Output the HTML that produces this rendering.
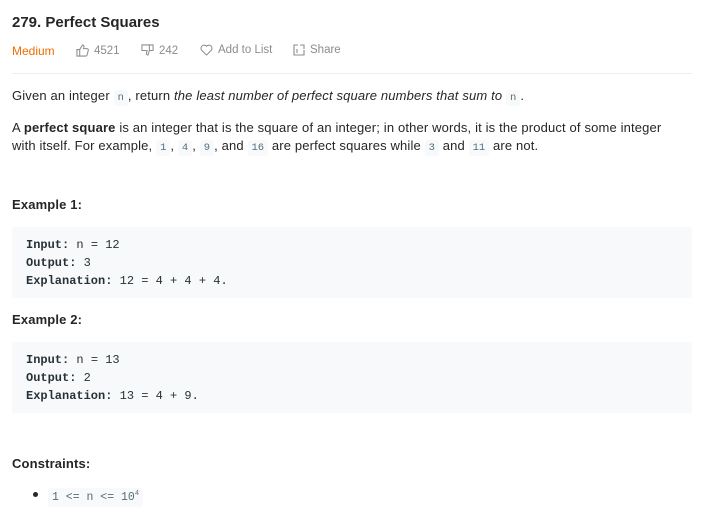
<!DOCTYPE html>
<html><head><style>
body{margin:0;background:#fff;font-family:"Liberation Sans",sans-serif;color:#262626;width:702px;height:516px;overflow:hidden;position:relative}
.a{position:absolute;white-space:nowrap}
code{font-family:"Liberation Mono",monospace;font-size:10.5px;background:#f7f9fa;color:#546e7a;padding:2px 4px;border-radius:3px;letter-spacing:0}
.p{font-size:13px;color:#262626;letter-spacing:0.15px}
pre{position:absolute;margin:0;left:12px;width:666px;background:#f7f9fa;border-radius:3px;padding:9px 0 0 14px;font-family:"Liberation Mono",monospace;font-size:12px;line-height:18px;color:#263238}
pre b{font-weight:bold}
.m{font-size:11.5px;color:#8c8c8c;display:flex;align-items:center;gap:5px}
</style></head><body>
<div class="a" style="left:12px;top:14px;font-size:15px;font-weight:bold;color:#262626">279. Perfect Squares</div>
<div class="a" style="left:12px;top:44px;font-size:12px;color:#ef6c00">Medium</div>
<div class="a m" style="left:76px;top:44px"><svg width="13" height="13" viewBox="0 0 14 14" fill="none" stroke="#8c8c8c" stroke-width="1.1"><path d="M1 6h3v7H1zM4 6l3-5c1 0 2 1 1.5 2.5L8 5h4c1 0 1.5 1 1.2 2l-1.3 5c-.2.7-.8 1-1.5 1H4"/></svg>4521</div>
<div class="a m" style="left:141px;top:44px"><svg width="13" height="13" viewBox="0 0 14 14" fill="none" stroke="#8c8c8c" stroke-width="1.1"><path d="M1 1h12v6H9l-1.5 5c-1 0-2-1-1.5-2.5L6.5 7H1zM9 1v6"/></svg>242</div>
<div class="a m" style="left:200px;top:44px"><svg width="13" height="12" viewBox="0 0 14 13" fill="none" stroke="#8c8c8c" stroke-width="1.1"><path d="M7 12L1.8 6.8A3 3 0 0 1 7 2.5a3 3 0 0 1 5.2 4.3z"/></svg>Add to List</div>
<div class="a m" style="left:293px;top:44px"><svg width="12" height="12" viewBox="0 0 12 12" fill="none" stroke="#8c8c8c" stroke-width="1.1"><path d="M5 1H1v10h10V6M7 1h4v4M4 5v4"/></svg>Share</div>
<div class="a" style="left:12px;top:73px;width:680px;border-top:1px solid #eee"></div>
<div class="a p" style="left:12px;top:88px">Given an integer <code>n</code>, return <i>the least number of perfect square numbers that sum to</i> <code>n</code>.</div>
<div class="a p" style="left:12px;top:119px;line-height:18px">A <b>perfect square</b> is an integer that is the square of an integer; in other words, it is the product of some integer<br>with itself. For example, <code>1</code>, <code>4</code>, <code>9</code>, and <code>16</code> are perfect squares while <code>3</code> and <code>11</code> are not.</div>
<div class="a p" style="left:12px;top:197px;font-weight:bold">Example 1:</div>
<pre style="top:227px;height:62px"><b>Input:</b> n = 12
<b>Output:</b> 3
<b>Explanation:</b> 12 = 4 + 4 + 4.</pre>
<div class="a p" style="left:12px;top:312px;font-weight:bold">Example 2:</div>
<pre style="top:342px;height:62px"><b>Input:</b> n = 13
<b>Output:</b> 2
<b>Explanation:</b> 13 = 4 + 9.</pre>
<div class="a p" style="left:12px;top:456px;font-weight:bold">Constraints:</div>
<div class="a" style="left:33px;top:492px;width:5px;height:5px;border-radius:50%;background:#262626"></div>
<div class="a" style="left:48px;top:487px"><code style="padding:3px 4px;font-size:11.5px">1 &lt;= n &lt;= 10<sup style="font-size:7px">4</sup></code></div>
</body></html>
